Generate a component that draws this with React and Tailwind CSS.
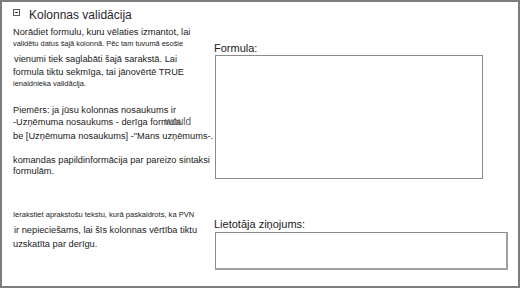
import React from "react";

const Line = ({ children, size = "text-[9.25px]", mt = "", h = "h-[12px] leading-[12px]" }) => (
  <div className={`whitespace-nowrap ${h} ${size} ${mt}`}>{children}</div>
);

export default function App() {
  return (
    <div
      className="relative w-[520px] h-[288px] overflow-hidden border-2 border-[#7d7d7d] bg-white text-[#222]"
      style={{ fontFamily: '"Liberation Sans", Arial, sans-serif' }}
    >
      {/* header */}
      <div className="flex items-start h-[22px]">
        <svg className="ml-[11px] mt-[7px] shrink-0" width="7" height="7" viewBox="0 0 7 7">
          <rect x="0.5" y="0.5" width="6" height="6" fill="#fff" stroke="#5a5a5a" />
          <rect x="2" y="3" width="3" height="1" fill="#333" />
        </svg>
        <span className="ml-[9px] mt-[3px] leading-[20px] text-[12px] text-[#2a2430] whitespace-nowrap">
          Kolonnas validācija
        </span>
      </div>

      <div className="flex">
        {/* left column */}
        <div className="w-[212px] shrink-0 pl-[11px] flex flex-col">
          <Line mt="mt-[2px]">Norādiet formulu, kuru vēlaties izmantot, lai</Line>
          <Line size="text-[7.4px]">validētu datus šajā kolonnā. Pēc tam tuvumā esošie</Line>
          <Line mt="mt-[3px]" size="text-[9.25px] pl-[1px]">vienumi tiek saglabāti šajā sarakstā. Lai</Line>
          <Line mt="mt-[1px]">formula tiktu sekmīga, tai jānovērtē TRUE</Line>
          <Line size="text-[7.5px]">ienaidnieka validācija.</Line>
          <Line mt="mt-[14px]">Piemērs: ja jūsu kolonnas nosaukums ir</Line>
          <Line>-Uzņēmuma nosaukums - derīga formula</Line>
          <Line mt="mt-[2px]">be [Uzņēmuma nosaukums] -"Mans uzņēmums-.</Line>
          <Line mt="mt-[12px]" h="h-[11px] leading-[12px]">komandas papildinformācija par pareizo sintaksi</Line>
          <Line>formulām.</Line>
          <Line mt="mt-[32px]" size="text-[7.55px]">Ierakstiet aprakstošu tekstu, kurā paskaidrots, ka PVN</Line>
          <Line mt="mt-[3px]" size="text-[9.25px] pl-[1px]">ir nepieciešams, lai šīs kolonnas vērtība tiktu</Line>
          <Line mt="mt-[2px]">uzskatīta par derīgu.</Line>
        </div>

        {/* right column */}
        <div className="flex flex-col">
          <div className="mt-[18px] h-[13px] leading-[13px] text-[11px] text-[#1a1a1a] whitespace-nowrap">Formula:</div>
          <div className="ml-[1px] w-[268px] h-[124px] border border-[#8c8c8c] bg-white" />
          <div className="mt-[39px] h-[13px] leading-[13px] text-[11px] text-[#1a1a1a] whitespace-nowrap">Lietotāja ziņojums:</div>
          <div className="ml-[1px] mt-[1px] w-[293px] h-[38px] border border-[#8c8c8c] border-r-2 border-b-2 border-r-[#a0a0a0] border-b-[#a0a0a0] bg-white" />
        </div>
      </div>

      {/* overlapping stray word */}
      <span className="absolute left-[163px] top-[114px] text-[10px] leading-[12px] text-[#5a5a5a] whitespace-nowrap">
        would
      </span>
    </div>
  );
}
